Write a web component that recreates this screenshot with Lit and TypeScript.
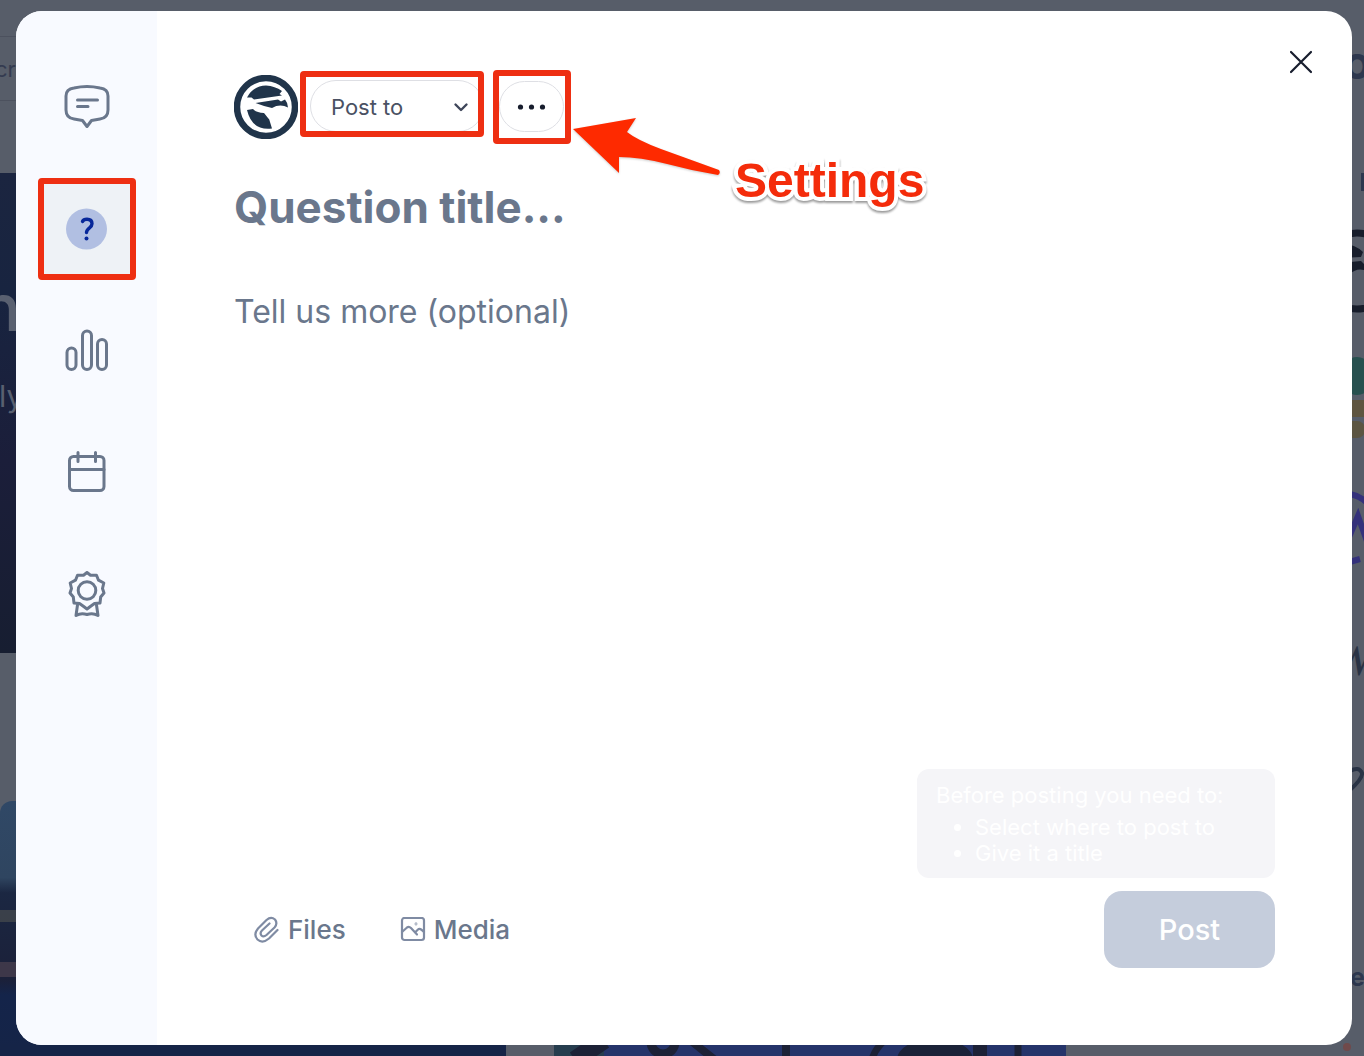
import { LitElement, html, css, svg } from "lit";
import { customElement, state } from "lit/decorators.js";
import { classMap } from "lit/directives/class-map.js";

/** The dimmed community page that lies behind the dialog. */
@customElement("page-backdrop")
export class PageBackdrop extends LitElement {
  static styles = css`
    :host {
      display: block;
      overflow: hidden;
    }
    svg {
      display: block;
      width: 100%;
      height: 100%;
    }
    .sans {
      font-family: Inter, sans-serif;
    }
    .serif {
      font-family: "Liberation Serif", serif;
    }
  `;

  render() {
    return html`
      <svg viewBox="0 0 1364 1056" preserveAspectRatio="xMidYMid slice" aria-hidden="true">
        <defs>
          <linearGradient id="hero" x1="0" y1="0" x2="0" y2="1">
            <stop offset="0" stop-color="#1b2540" />
            <stop offset="0.25" stop-color="#182440" />
            <stop offset="0.6" stop-color="#1b1e3a" />
            <stop offset="1" stop-color="#171e31" />
          </linearGradient>
          <linearGradient id="photo" x1="0" y1="0" x2="0" y2="1">
            <stop offset="0" stop-color="#304866" />
            <stop offset="0.3" stop-color="#2f4560" />
            <stop offset="0.36" stop-color="#1b2742" />
            <stop offset="0.7" stop-color="#1b2039" />
            <stop offset="0.76" stop-color="#14244a" />
            <stop offset="1" stop-color="#152447" />
          </linearGradient>
        </defs>
        <rect width="1364" height="1056" fill="#575d69" />
        <path d="M0 36.500H40M0 100.500H40" stroke="#4c515e" />
        <text class="sans" x="-5" y="77" font-size="22" fill="#343b50">cr</text>
        <rect y="173" width="100" height="480" fill="url(#hero)" />
        <text class="sans" x="-19" y="331" font-size="66" font-weight="500" fill="#596070">n</text>
        <text class="sans" x="-1" y="407" font-size="30" fill="#596070">ly</text>
        <rect y="801" width="506" height="255" rx="12" fill="url(#photo)" />
        <rect y="910" width="16" height="12" fill="#474b4e" opacity="0.7" />
        <rect y="962" width="16" height="15" fill="#4c4150" opacity="0.7" />
        <rect y="1044" width="506" height="12" fill="#152447" />
        <rect x="554" y="1040" width="512" height="16" fill="#25346a" />
        <rect x="554" y="1040" width="50" height="16" fill="#263d4e" />
        <g stroke="#1c2136" fill="none">
          <path d="M575 1060L604 1040" stroke-width="18" />
          <circle cx="663" cy="1042" r="12" stroke-width="9" />
          <path d="M690 1040L715 1060M786 1040V1060" stroke-width="8" />
          <path d="M885 1040Q874 1050 872 1060M1018 1040V1060" stroke-width="7" />
          <path d="M980 1040V1060" stroke-width="14" />
        </g>
        <ellipse cx="935" cy="1060" rx="38" ry="22" fill="#1b2238" />

        <g transform="translate(0 2)">
          <text class="sans" x="1343" y="77" font-size="46" font-weight="700" fill="#2d374e">o</text>
          <rect x="1361" y="171" width="3" height="18" fill="#2d374e" />
          <circle cx="1357" cy="269" r="38" fill="none" stroke="#171d2b" stroke-width="7" />
          <path d="M1340 243Q1352 240 1363 250L1361 255L1340 256ZM1340 261L1361 259L1364 262V268Q1356 266 1350 272L1340 280Z" fill="#171d2b" />
          <rect x="1342" y="355" width="30" height="38" rx="16" fill="#27504f" />
          <rect x="1344" y="398" width="30" height="17" rx="8" fill="#5f5540" />
          <rect x="1342" y="419" width="23" height="17" rx="8" fill="#5c5542" />
          <path d="M1350 492Q1360 494 1366 500M1346 542L1358 514L1368 542M1346 561L1360 557" fill="none" stroke="#34317b" stroke-width="6" />
          <text class="serif" x="1334" y="673" font-size="46" font-style="italic" fill="#293345">W</text>
          <path d="M1350 769Q1359 764 1362 771Q1363 776 1350 788" fill="none" stroke="#293345" stroke-width="4" />
          <text class="sans" x="1350" y="984" font-size="25" font-weight="700" fill="#2d374e">e</text>
          <circle cx="1347" cy="1045" r="4" fill="#704a4b" />
        </g>
      </svg>
    `;
  }
}

const icon = (label: string) => {
  switch (label) {
    case "Discussion":
      return svg`<path d="M11 5Q24 2 37 5Q45 6 45 13V27Q45 35 37 36L28.500 37.500L24 43.500L19.500 37.500L11 36Q3 35 3 27V13Q3 6 11 5Z"/><path d="M14.500 17H34.500M14.500 23.500H25"/>`;
    case "Poll":
      return svg`<rect x="4" y="21" width="9" height="21.500" rx="4.500"/><rect x="19.500" y="4" width="9" height="38.500" rx="4.500"/><rect x="34.500" y="12.500" width="9" height="30" rx="4.500"/>`;
    case "Event":
      return svg`<rect x="6.500" y="7.500" width="34.500" height="34" rx="4"/><path d="M6.500 20.500H41M15 3.500V12.500M32.500 3.500V12.500"/>`;
    default:
      return svg`<path d="M24 1.500L27.500 4.200H33.500L35.500 9.200L40.800 12L39.500 17.500L41 22L37.700 26L37 32L31.500 32.500L28 35L24 38L20 35L16.500 32.500L11 32L10.300 26L7 22L8.500 17.500L7.200 12L12.500 9.200L14.500 4.200H20.500Z"/><circle cx="24" cy="19.500" r="8.800"/><path d="M14.500 34L13 44.500Q18 41.500 24 43.500Q30 41.500 35 44.500L33.500 34"/>`;
  }
};

const KINDS = ["Discussion", "Question", "Poll", "Event", "Praise"];

/** The column that picks the kind of post. */
@customElement("kind-rail")
export class KindRail extends LitElement {
  static styles = css`
    :host {
      display: block;
      background: #f8faff;
    }
    nav {
      display: flex;
      flex-direction: column;
      align-items: center;
      gap: 20px;
      padding: 45px 20px;
    }
    .kind {
      box-sizing: border-box;
      width: 98px;
      height: 102px;
      display: flex;
      align-items: center;
      justify-content: center;
      padding: 0;
      border: 6px solid transparent;
      border-radius: 4px;
      background: none;
      color: #6a778c;
      cursor: pointer;
    }
    .kind svg {
      width: 48px;
      height: 48px;
      fill: none;
      stroke: currentColor;
      stroke-width: 3px;
      stroke-linecap: round;
      stroke-linejoin: round;
    }
    .marked {
      border-color: #ee2f12;
      background: #eef2f6;
    }
    .marked .disc {
      fill: #b1bfe2;
      stroke: none;
    }
    .marked .sign {
      stroke: #07279a;
      stroke-width: 3.4px;
    }
    .marked .dot {
      fill: #07279a;
      stroke: none;
    }
  `;

  @state() private selected = "Question";

  render() {
    return html`
      <nav aria-label="Post type">
        ${KINDS.map(
          (kind) => html`
            <button
              class=${classMap({ kind: true, marked: kind === this.selected })}
              aria-label=${kind}
              aria-pressed=${kind === this.selected}
              @click=${() => (this.selected = kind)}
            >
              <svg viewBox="0 0 48 48" aria-hidden="true">
                ${kind === "Question"
                  ? svg`<circle class="disc" cx="23.500" cy="24" r="20.500"/>
                      <path class="sign" d="M19.500 16.500Q20.500 14.200 24 14.200Q29 14.200 29 18.800Q29 21 26.500 22.800Q23.500 25 23.500 27.500"/>
                      <circle class="dot" cx="23.500" cy="33.500" r="2"/>`
                  : icon(kind)}
              </svg>
            </button>
          `
        )}
      </nav>
    `;
  }
}

@customElement("app-root")
export class AppRoot extends LitElement {
  static styles = css`
    :host {
      display: grid;
      position: relative;
      box-sizing: border-box;
      min-height: 100vh;
      padding: 11px 12px 11px 16px;
      font-family: Inter, "Liberation Sans", sans-serif;
      font-optical-sizing: none;
      color: #6a778c;
    }
    page-backdrop {
      position: absolute;
      inset: 0;
    }
    .dialog {
      position: relative;
      display: grid;
      grid-template-columns: 141px 1fr;
      border-radius: 26px;
      overflow: hidden;
      background: #fff;
    }
    .compose {
      position: relative;
      display: flex;
      flex-direction: column;
      padding: 59px 77px 77px;
    }
    button,
    select,
    input,
    textarea {
      font: inherit;
      color: inherit;
    }
    .close {
      position: absolute;
      top: 31px;
      right: 31px;
      width: 40px;
      height: 40px;
      padding: 0;
      border: 0;
      background: none;
      color: #171d2d;
    }
    .close svg {
      display: block;
      margin: auto;
    }
    .top {
      display: flex;
      align-items: flex-start;
      gap: 2px;
    }
    .avatar {
      flex: none;
      margin-top: 5px;
    }
    .mark {
      box-sizing: border-box;
      position: relative;
      border: 6px solid #ee2f12;
      border-radius: 4px;
    }
    .target {
      display: flex;
      width: 184px;
      height: 66px;
      margin-top: 1px;
      padding: 3px 0 0 4px;
      overflow: hidden;
    }
    .target select {
      box-sizing: border-box;
      flex: none;
      width: 174px;
      height: 52px;
      padding: 1px 20px 0;
      border: 1px solid #dedfe4;
      border-radius: 26px;
      appearance: none;
      background: none;
      font-size: 22px;
      color: #4a5163;
    }
    .chevron {
      position: absolute;
      right: 9px;
      top: 22px;
      pointer-events: none;
    }
    .options {
      width: 78px;
      height: 74px;
      margin-left: 7px;
      padding: 5px 0 0;
    }
    .options button {
      display: grid;
      place-items: center;
      box-sizing: border-box;
      width: 65px;
      height: 51px;
      padding: 0;
      border: 1px solid #dedfe4;
      border-radius: 26px;
      background: none;
    }
    .callout {
      position: absolute;
      left: 78px;
      top: 41px;
      display: flex;
      align-items: flex-start;
      gap: 12px;
      pointer-events: none;
    }
    .callout svg {
      flex: none;
      overflow: visible;
      filter: drop-shadow(0 1px 1px #0003);
    }
    .callout span {
      margin-top: 36px;
      font: 700 48px/56px "Liberation Sans", Arial, sans-serif;
      color: #f42c0b;
      -webkit-text-stroke: 8px #fff;
      paint-order: stroke fill;
      stroke-linejoin: round;
      filter: drop-shadow(0 2px 1px #0006);
    }
    .title,
    .details {
      box-sizing: border-box;
      width: 100%;
      padding: 0;
      border: 0;
      outline: 0;
      background: none;
    }
    .title {
      height: 64px;
      margin-top: 31px;
      font-size: 44px;
      font-weight: 700;
    }
    .details {
      flex: 1;
      margin-top: 53px;
      font-size: 32px;
      line-height: 40px;
      resize: none;
    }
    ::placeholder {
      color: #6a778c;
      opacity: 1;
    }
    .foot {
      display: flex;
      align-items: flex-end;
      justify-content: space-between;
    }
    .attach {
      display: flex;
      gap: 54px;
      padding: 0 20px;
    }
    .attach button {
      display: flex;
      align-items: center;
      gap: 8px;
      height: 77px;
      padding: 0;
      border: 0;
      background: none;
      font-size: 26px;
      font-weight: 500;
    }
    .send {
      display: flex;
      flex-direction: column;
      align-items: flex-end;
      gap: 13px;
    }
    .hint {
      box-sizing: border-box;
      width: 358px;
      padding: 13px 19px 12px;
      border-radius: 12px;
      background: #f5f5f8;
      color: #fff;
      font-size: 22px;
      line-height: 26px;
    }
    .hint p {
      margin: 0 0 6px;
    }
    .hint ul {
      margin: 0;
      padding-left: 39px;
    }
    .post {
      width: 171px;
      height: 77px;
      padding: 0;
      border: 0;
      border-radius: 18px;
      background: #c5cddc;
      color: #fff;
      font-size: 29px;
      font-weight: 500;
    }
  `;

  render() {
    return html`
      <page-backdrop></page-backdrop>
      <div class="dialog" role="dialog" aria-label="Ask a question">
        <kind-rail></kind-rail>
        <main class="compose">
          <button class="close" aria-label="Close">
            <svg width="24" height="24" viewBox="0 0 24 24" fill="none" stroke="currentColor" stroke-width="2.200" stroke-linecap="round">
              <path d="M2 2L22 22M22 2L2 22" />
            </svg>
          </button>

          <div class="top">
            <svg class="avatar" width="64" height="64" viewBox="0 0 64 64" role="img" aria-label="Profile">
              <circle cx="32" cy="32" r="29" fill="#fff" stroke="#20344a" stroke-width="6.500" />
              <path
                fill="#20344a"
                d="M13 22.500Q19 11 32 10.500Q41 11 48 16L45.500 19L48 20.500L20 24.500L17.500 22.500ZM21.500 28L44 24.500L47 26.500L51 24.500Q54 28 54 32.500Q46 28.500 38 33Q29 31 21.500 28ZM13 35L19 34Q22 37.500 30 38L34 43Q35.500 44 36 47L38 53.500Q18 56 13 35Z"
              />
            </svg>
            <div class="mark target">
              <select aria-label="Post to">
                <option>Post to</option>
              </select>
              <svg class="chevron" width="16" height="16" viewBox="0 0 16 16" fill="none" stroke="#3f465a" stroke-width="2.400" stroke-linecap="round" stroke-linejoin="round" aria-hidden="true">
                <path d="M2.500 5.500L8 11L13.500 5.500" />
              </svg>
            </div>
            <div class="mark options">
              <button aria-label="Settings">
                <svg width="32" height="8" viewBox="0 0 32 8" fill="#171d2d" aria-hidden="true">
                  <circle cx="4.500" cy="4" r="2.600" />
                  <circle cx="15.500" cy="4" r="2.600" />
                  <circle cx="26.500" cy="4" r="2.600" />
                </svg>
              </button>
              <div class="callout">
                <svg width="146" height="60" viewBox="0 0 146 60" aria-hidden="true">
                  <path fill="#fe2a00" d="M-4 12L59 1L50 15Q60 23 84 32L142 53Q144 56 141 58Q116 54 90 47Q63 40 42 40V56Z" />
                </svg>
                <span>Settings</span>
              </div>
            </div>
          </div>

          <input class="title" type="text" aria-label="Question title" placeholder="Question title..." />
          <textarea class="details" aria-label="Details" placeholder="Tell us more (optional)"></textarea>

          <div class="foot">
            <div class="attach">
              <button>
                <svg width="26" height="28" viewBox="0 0 26 28" fill="none" stroke="#7f8ba3" stroke-width="2.200" stroke-linecap="round" stroke-linejoin="round" aria-hidden="true">
                  <path d="M23.500 14L15 22.500Q8.500 28 3.500 23.500Q-1 18.500 4 12.500L12.500 4Q17 0 21 3.500Q24 7.500 20.500 11.500L12.500 19Q9.500 21.500 7.500 19.500Q5.500 17 8 14.500L15.500 7.500" />
                </svg>
                Files
              </button>
              <button>
                <svg width="26" height="26" viewBox="0 0 26 26" fill="none" stroke="#7f8ba3" stroke-width="2.200" stroke-linecap="round" stroke-linejoin="round" aria-hidden="true">
                  <rect x="2" y="1" width="22" height="22" rx="2.500" />
                  <path d="M2 15L7 10.500Q9 9 11 11L17 17.500M15 15.500L18 12.500Q20 10.500 24 15" />
                  <circle cx="16" cy="7" r="0.300" />
                </svg>
                Media
              </button>
            </div>
            <div class="send">
              <div class="hint" role="tooltip">
                <p>Before posting you need to:</p>
                <ul>
                  <li>Select where to post to</li>
                  <li>Give it a title</li>
                </ul>
              </div>
              <button class="post">Post</button>
            </div>
          </div>
        </main>
      </div>
    `;
  }
}
